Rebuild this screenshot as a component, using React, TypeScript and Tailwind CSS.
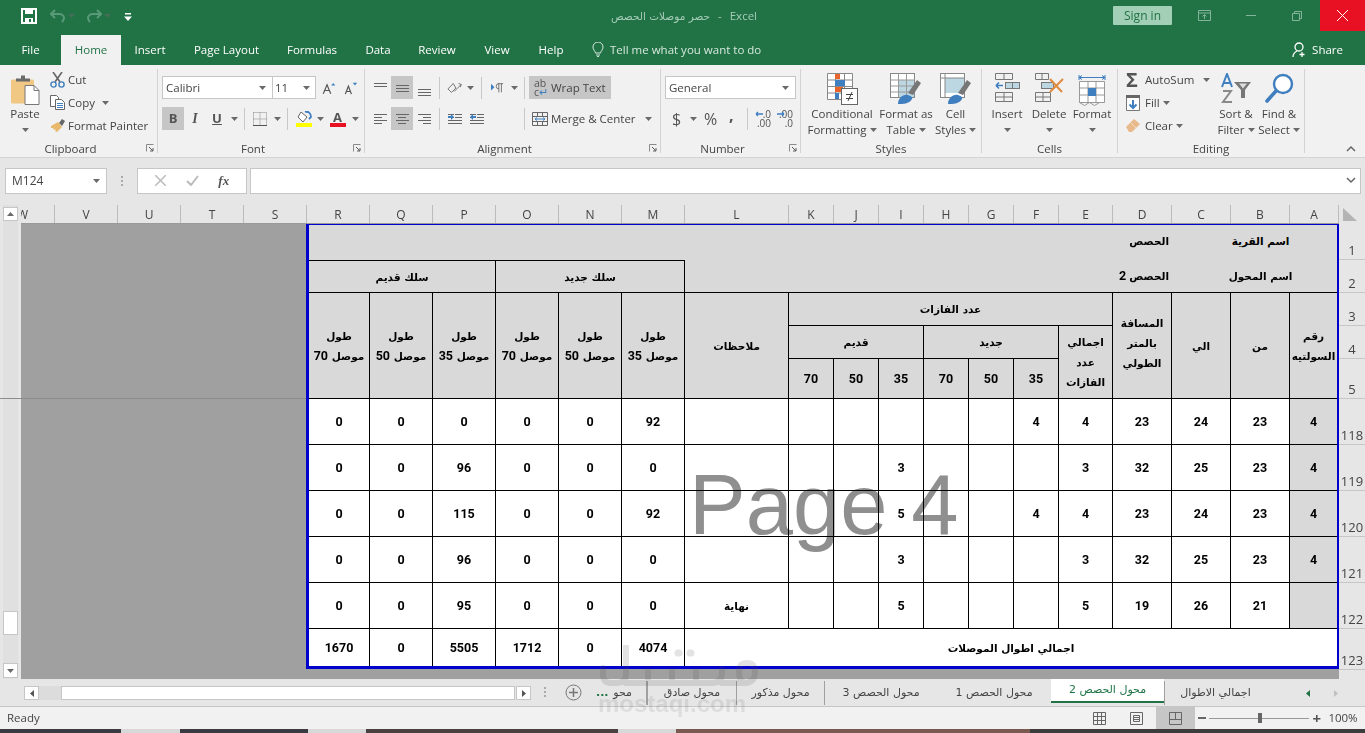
import React from 'react';

const Caret = ({ className = '' }: { className?: string }) => (
  <svg width="7" height="4" viewBox="0 0 7 4" className={`flex-none ${className}`}><path d="M0 0h7L3.5 4z" fill="#6a6a6a" /></svg>
);

const Launcher = () => (
  <svg width="8" height="8" viewBox="0 0 8 8" className="absolute right-[3px] top-[1px]">
    <path d="M.5 7.5V.5h7" fill="none" stroke="#8a8a8a" />
    <path d="M3 3l4 4M7 4v3H4" fill="none" stroke="#5a5a5a" />
  </svg>
);

function Group({ w, label, launcher, children }: { w: string; label: string; launcher?: boolean; children: React.ReactNode }) {
  return (
    <div className={`${w} flex-none h-[84px] mt-[4px] border-r border-[#d2d2d2] flex flex-col`}>
      <div className="h-[74px] flex">{children}</div>
      <div className={`relative h-[10px] leading-[12px] text-center text-[11.5px] text-[#444] ${launcher ? 'pr-[16px]' : ''}`}>
        {label}
        {launcher && <Launcher />}
      </div>
    </div>
  );
}

function Big({ w, icon, lines, caret }: { w: string; icon: React.ReactNode; lines: string[]; caret?: boolean }) {
  return (
    <div className={`${w} flex-none flex flex-col items-center pt-[4px] text-[#444] whitespace-nowrap`}>
      <div className="h-[33px] flex items-start justify-center">{icon}</div>
      {lines.map((l, i) => (
        <div key={l} className="h-[16px] leading-[16px] flex items-center gap-[3px]">
          {l}
          {caret && i === lines.length - 1 && <Caret />}
        </div>
      ))}
      {lines.length === 1 && <div className="h-[16px] flex items-center"><Caret /></div>}
    </div>
  );
}

const Lines = ({ rows }: { rows: [number, number, number][] }) => (
  <svg width="16" height="16" viewBox="0 0 16 16">
    {rows.map((r, i) => <path key={i} d={`M${r[0]} ${r[2] + 0.5}H${r[1]}`} stroke="#666" />)}
  </svg>
);

const Sel = ({ on, children, w = 'w-[22px]' }: { on?: boolean; children: React.ReactNode; w?: string }) => (
  <div className={`${w} h-[23px] flex-none flex items-center justify-center ${on ? 'bg-[#c6c6c6]' : ''}`}>{children}</div>
);

const Sep = () => <div className="w-px h-[22px] bg-[#c8c8c8] flex-none" />;

function Clipboard() {
  return (
    <>
      <div className="w-[50px] flex flex-col items-center pt-[4px] text-[#444]">
        <svg width="30" height="30" viewBox="0 0 30 30" className="h-[33px]">
          <rect x="1" y="5" width="23" height="24" rx="1.5" fill="#f0c884" />
          <path d="M6 7V4h5V1h4v3h5v3z" fill="#6a6a6a" />
          <path d="M15 11h9l5 5v14H15z" fill="#fff" stroke="#777" />
          <path d="M24 11v5h5" fill="none" stroke="#777" />
        </svg>
        <div className="h-[16px] leading-[16px]">Paste</div>
        <div className="h-[16px] flex items-center"><Caret /></div>
      </div>
      <div className="flex flex-col text-[#444] -mt-[1px]">
        <div className="h-[23px] flex items-center whitespace-nowrap">
          <svg width="15" height="16" viewBox="0 0 15 16" className="mr-[3px]">
            <path d="M3 0l7 10M12 0L5 10" stroke="#666" strokeWidth="1.6" />
            <circle cx="3.5" cy="12.5" r="2.6" fill="none" stroke="#3f7fc0" strokeWidth="1.4" />
            <circle cx="11.5" cy="12.5" r="2.6" fill="none" stroke="#3f7fc0" strokeWidth="1.4" />
          </svg>
          Cut
        </div>
        <div className="h-[23px] flex items-center whitespace-nowrap">
          <svg width="15" height="15" viewBox="0 0 15 15" className="mr-[3px]">
            <path d="M.5.5h6l2 2v9H.5z" fill="#fff" stroke="#666" />
            <path d="M5.5 4.5h6l3 3v7h-9z" fill="#fff" stroke="#666" />
            <path d="M7 8.5h6M7 10.5h6M7 12.5h6" stroke="#3f7fc0" />
          </svg>
          Copy
          <Caret className="ml-[7px]" />
        </div>
        <div className="h-[23px] flex items-center whitespace-nowrap">
          <svg width="16" height="15" viewBox="0 0 16 15" className="mr-[2px]">
            <path d="M9 5l3-4 3 2-3 5z" fill="#666" />
            <path d="M1 8l7-4 4 5-5 5-2-1 1-2-2 1-1-2-2 0z" fill="#e8b96c" />
          </svg>
          Format Painter
        </div>
      </div>
    </>
  );
}

function Font() {
  return (
    <div className="pt-[7px] pl-[4px] text-[#444]">
      <div className="h-[23px] flex items-center">
        <div className="w-[111px] h-[23px] bg-white border border-[#c6c6c6] flex items-center justify-between px-[3px] pr-[6px]">Calibri<Caret /></div>
        <div className="w-[43px] h-[23px] bg-white border border-l-0 border-[#c6c6c6] flex items-center justify-between px-[2px] pr-[5px]">11<Caret /></div>
        <svg width="15" height="14" viewBox="0 0 18 14" className="ml-[6px]">
          <path d="M1.5 14L6 3l4.500 11M3.200 10h5.600" fill="none" stroke="#555" strokeWidth="1.400" />
          <path d="M11 4l2.500-3L16 4z" fill="#3f7fc0" />
        </svg>
        <svg width="14" height="14" viewBox="0 0 16 14" className="ml-[7px]">
          <path d="M1.500 14L5 5l3.500 9M2.800 11h4.400" fill="none" stroke="#555" strokeWidth="1.400" />
          <path d="M10 1h5l-2.500 3z" fill="#3f7fc0" />
        </svg>
      </div>
      <div className="h-[23px] flex items-center mt-[8px]">
        <Sel on><span className="font-bold text-[#555] text-[13px]">B</span></Sel>
        <Sel><span className="italic font-['Liberation_Serif',serif] font-bold text-[#555] text-[14px]">I</span></Sel>
        <Sel><span className="underline font-bold text-[#555] text-[13px]">U</span></Sel>
        <Caret className="ml-[3px]" />
        <div className="w-[6px]" />
        <Sep />
        <svg width="14" height="14" viewBox="0 0 14 14" className="ml-[8px]">
          <path d="M.5.500h13v13M.5.500v13M7 .500v13M.5 7H14" fill="none" stroke="#888" strokeDasharray="1 1" />
          <path d="M0 13.500h14" stroke="#555" />
        </svg>
        <Caret className="ml-[7px]" />
        <div className="w-[6px]" />
        <Sep />
        <div className="w-[17px] ml-[7px] flex flex-col items-center">
          <svg width="16" height="12" viewBox="0 0 16 12">
            <path d="M5 1l6 5-4 5-5-5z" fill="#fff" stroke="#666" />
            <path d="M9 1c3-1 6 1 6 5l-2 2" fill="none" stroke="#3f7fc0" strokeWidth="1.800" />
          </svg>
          <div className="w-[16px] h-[4px] bg-[#ffff00]" />
        </div>
        <Caret className="ml-[5px]" />
        <div className="w-[17px] ml-[5px] flex flex-col items-center">
          <span className="text-[13px] leading-[12px] text-[#555] font-bold">A</span>
          <div className="w-[16px] h-[4px] bg-[#e81123]" />
        </div>
        <Caret className="ml-[6px]" />
      </div>
    </div>
  );
}

const doIcon = (d: string) => (
  <svg width="16" height="16" viewBox="0 0 16 16">
    <path d="M1 3.500h6M1 6.500h6M1 9.500h14M1 12.500h14" stroke="#666" />
    <path d={d} fill="#3f7fc0" />
    <path d="M8 3.500h7M8 6.500h7" stroke="#666" />
  </svg>
);

function Alignment() {
  return (
    <div className="pt-[7px] pl-[4px] text-[#444]">
      <div className="h-[23px] flex items-center">
        <Sel><Lines rows={[[2, 15, 3], [2, 15, 6]]} /></Sel>
        <Sel on><Lines rows={[[2, 15, 5], [2, 15, 8], [2, 15, 11]]} /></Sel>
        <Sel><Lines rows={[[2, 15, 9], [2, 15, 12], [2, 15, 15]]} /></Sel>
        <div className="w-[4px]" />
        <Sep />
        <svg width="16" height="16" viewBox="0 0 18 16" className="ml-[7px]">
          <path d="M1 9l6-6 3 5-5 5zM8 12l8-8M13 3l3 1-1 3" fill="none" stroke="#666" />
        </svg>
        <Caret className="ml-[4px]" />
        <div className="w-[7px]" />
        <Sep />
        <svg width="13" height="12" viewBox="0 0 15 12" className="ml-[9px]">
          <path d="M0 1l4 4-4 4z" fill="#3f7fc0" />
          <path d="M9 1a3 3 0 000 6M9 1v10M12 1v10M8 1h6" fill="none" stroke="#666" />
        </svg>
        <Caret className="ml-[7px]" />
        <div className="w-[6px]" />
        <Sep />
        <div className="w-[4px]" />
        <div className="w-[82px] h-[23px] bg-[#c6c6c6] flex items-center px-[5px] gap-[5px] whitespace-nowrap">
          <span className="text-[10.500px] leading-[9px] w-[12px] text-[#555]">ab<br />c<span className="text-[#3f7fc0]">↵</span></span>
          Wrap Text
        </div>
      </div>
      <div className="h-[23px] flex items-center mt-[8px]">
        <Sel><Lines rows={[[2, 15, 3], [2, 10, 6], [2, 15, 9], [2, 10, 12]]} /></Sel>
        <Sel on><Lines rows={[[2, 15, 3], [4, 12, 6], [2, 15, 9], [4, 12, 12]]} /></Sel>
        <Sel><Lines rows={[[2, 15, 3], [7, 15, 6], [2, 15, 9], [7, 15, 12]]} /></Sel>
        <div className="w-[4px]" />
        <Sep />
        <div className="ml-[7px]">{doIcon('M1 5h3V3l3 3-3 3V7H1z')}</div>
        <div className="ml-[6px]">{doIcon('M7 5H4V3L1 6l3 3V7h3z')}</div>
        <div className="w-[39px]" />
        <Sep />
        <div className="w-[7px]" />
        <svg width="16" height="16" viewBox="0 0 16 16" className="mr-[3px]">
          <path d="M.5 1.500h15v13H.5zM.5 5.500h15M.5 10.500h15M5.500 1.500v4M10.500 1.500v4M5.500 10.500v4M10.500 10.500v4" fill="none" stroke="#666" />
          <path d="M3 8h10M3 8l2-1.500M3 8l2 1.500M13 8l-2-1.500M13 8l-2 1.500" fill="none" stroke="#3f7fc0" />
        </svg>
        <span className="whitespace-nowrap">Merge &amp; Center</span>
        <Caret className="ml-[9px]" />
      </div>
    </div>
  );
}

const decIcon = (top: string, bottom: string, d: string) => (
  <div className="w-[16px] text-[10px] leading-[9px] text-[#555] text-right relative">
    {top}<br />{bottom}
    <svg width="8" height="6" viewBox="0 0 8 6" className="absolute left-0 top-[1px]"><path d={d} stroke="#3f7fc0" fill="none" strokeWidth="1.300" /></svg>
  </div>
);

function NumberGroup() {
  return (
    <div className="pt-[7px] pl-[4px] text-[#444]">
      <div className="w-[131px] h-[23px] bg-white border border-[#c6c6c6] flex items-center justify-between px-[3px] pr-[6px]">General<Caret /></div>
      <div className="h-[23px] flex items-center mt-[8px] pl-[7px]">
        <span className="text-[16px] text-[#555] w-[10px]">$</span>
        <Caret className="ml-[8px]" />
        <span className="text-[16px] text-[#555] ml-[7px] w-[13px]">%</span>
        <span className="text-[16px] font-bold text-[#555] ml-[12px] w-[4px] leading-[10px] mb-[8px]">,</span>
        <div className="w-[14px]" />
        <Sep />
        <div className="ml-[7px]">{decIcon('.0', '.00', 'M8 3H1M1 3l2-2M1 3l2 2')}</div>
        <div className="ml-[6px]">{decIcon('.00', '.0', 'M0 3h7M7 3L5 1M7 3L5 5')}</div>
      </div>
    </div>
  );
}

const CondIcon = () => (
  <svg width="31" height="32" viewBox="0 0 31 32">
    <path d="M.5.500h25v26H.5zM.5 7h25M.5 13.500h25M.5 20h25M8.500.500v26M17.500.500v26" fill="#fff" stroke="#888" />
    <rect x="8" y="1" width="5" height="5" fill="#e8642c" />
    <rect x="8" y="7" width="10" height="6" fill="#3f7fc0" />
    <rect x="8" y="14" width="8" height="5" fill="#e8642c" />
    <rect x="8" y="20" width="4" height="6" fill="#3f7fc0" />
    <rect x="14.500" y="15.500" width="16" height="16" fill="#fff" stroke="#666" />
    <path d="M19 21.500h7M19 25.500h7M25 19l-4 9" stroke="#444" />
  </svg>
);

const TableIcon = ({ styles }: { styles?: boolean }) => (
  <svg width="32" height="32" viewBox="0 0 32 32">
    <rect x=".5" y=".5" width="24" height="24" fill="#fff" stroke="#888" />
    <rect x={styles ? 5 : 8} y={styles ? 5 : 7} width={styles ? 19 : 16} height={styles ? 15 : 17} fill="#bcd6e2" />
    {styles ? <path d="M5 .5v24M.5 5h24" stroke="#888" /> : <path d="M8.500.500v24M16.500.500v24M.5 7h24M.5 13h24M.5 19h24" stroke="#999" />}
    <path d="M18 20l9-13 4 3-8 12z" fill="#777" />
    <path d="M8 31c0-6 5-10 10-9 3 1 5 2 4 4-3 5-9 5-14 5z" fill="#3f7fc0" />
  </svg>
);

const InsertIcon = () => (
  <svg width="26" height="29" viewBox="0 0 26 29">
    <path d="M1.500.500h17v6h-17zM10 .500v6M1.500 19.500h17v9h-17zM1.500 24h17M10 19.500v9" fill="none" stroke="#777" />
    <rect x="11.500" y="9.500" width="14" height="6" fill="#bcd6e2" stroke="#777" />
    <path d="M18.500 9.500v6" stroke="#777" />
    <path d="M9 12.500H2M2 12.500l3-3M2 12.500l3 3" fill="none" stroke="#3f7fc0" strokeWidth="1.600" />
  </svg>
);

const DeleteIcon = () => (
  <svg width="30" height="29" viewBox="0 0 30 29">
    <path d="M1.500.500h13v6h-13zM8 .500v6M1.500 19.500h15v9h-15zM1.500 24h15M9 19.500v9" fill="none" stroke="#777" />
    <rect x="7.500" y="9.500" width="12" height="6" fill="#bcd6e2" stroke="#777" />
    <path d="M16 6l12 13M29 6L16 19" stroke="#e08a3c" strokeWidth="2" />
  </svg>
);

const FormatIcon = () => (
  <svg width="28" height="33" viewBox="0 0 28 33">
    <path d="M1 4.500h26M1 2v5M27 2v5M1 4.500l3-2M1 4.500l3 2M27 4.500l-3-2M27 4.500l-3 2" fill="none" stroke="#3f7fc0" />
    <path d="M1.500 8.500h25v21h-25zM1.500 15h25M1.500 22h25M10 8.500v21M18 8.500v21" fill="#fff" stroke="#999" />
    <rect x="10" y="15" width="8" height="8" fill="#3f7fc0" />
    <path d="M1.500 29.500l5 3 5-3 5 3 5-3" fill="none" stroke="#999" />
  </svg>
);

const SortIcon = () => (
  <svg width="32" height="32" viewBox="0 0 32 32">
    <path d="M2 14L7 1l5 13M3.600 10h7" fill="none" stroke="#3f7fc0" strokeWidth="2" />
    <path d="M3 18h8l-8 11h9" fill="none" stroke="#8a8a8a" strokeWidth="2" />
    <path d="M14 9h17l-6 8v8h-4v-8z" fill="#777" />
    <path d="M19 10.500h8l-4 5z" fill="#ddd" />
  </svg>
);

const FindIcon = () => (
  <svg width="29" height="30" viewBox="0 0 29 30">
    <circle cx="18" cy="11" r="9" fill="#fff" stroke="#3f7fc0" strokeWidth="2.400" />
    <path d="M11 18L2 28" stroke="#3f7fc0" strokeWidth="3.600" strokeLinecap="round" />
  </svg>
);

function Ribbon() {
  return (
    <div className="h-[93px] flex-none bg-[#f1f1f1] border-b border-[#d4d4d4] flex text-[11.5px]">
      <Group w="w-[158px]" label="Clipboard" launcher><Clipboard /></Group>
      <Group w="w-[207px]" label="Font" launcher><Font /></Group>
      <Group w="w-[296px]" label="Alignment" launcher><Alignment /></Group>
      <Group w="w-[140px]" label="Number" launcher><NumberGroup /></Group>
      <Group w="w-[181px]" label="Styles">
        <Big w="w-[82px]" icon={<CondIcon />} lines={['Conditional', 'Formatting']} caret />
        <Big w="w-[46px]" icon={<TableIcon />} lines={['Format as', 'Table']} caret />
        <Big w="w-[53px]" icon={<TableIcon styles />} lines={['Cell', 'Styles']} caret />
      </Group>
      <Group w="w-[136px]" label="Cells">
        <Big w="w-[50px]" icon={<InsertIcon />} lines={['Insert']} />
        <Big w="w-[34px]" icon={<DeleteIcon />} lines={['Delete']} />
        <Big w="w-[52px]" icon={<FormatIcon />} lines={['Format']} />
      </Group>
      <Group w="w-[187px]" label="Editing">
        <div className="w-[96px] flex-none flex flex-col text-[#444] pl-[8px] -mt-[1px]">
          <div className="h-[23px] flex items-center whitespace-nowrap">
            <span className="w-[19px] text-[20px] leading-[20px] text-[#555] font-bold">Σ</span>AutoSum
            <Caret className="ml-[9px]" />
          </div>
          <div className="h-[23px] flex items-center whitespace-nowrap">
            <svg width="14" height="16" viewBox="0 0 14 16" className="mr-[5px]">
              <path d="M.5.500h13v15H.5z" fill="#fff" stroke="#777" />
              <path d="M0 0h14v3H0z" fill="#666" />
              <path d="M7 5v8M3.500 9.500L7 13l3.500-3.500" fill="none" stroke="#3f7fc0" strokeWidth="2" />
            </svg>
            Fill
            <Caret className="ml-[3px]" />
          </div>
          <div className="h-[23px] flex items-center whitespace-nowrap text-[#444]">
            <svg width="14" height="13" viewBox="0 0 14 13" className="mr-[5px]">
              <path d="M0 8l8-8 6 5-8 8H3z" fill="#e8b98a" />
              <path d="M5 4l5 5" stroke="#f6dcc0" />
            </svg>
            Clear
            <Caret className="ml-[3px]" />
          </div>
        </div>
        <Big w="w-[44px]" icon={<SortIcon />} lines={['Sort &', 'Filter']} caret />
        <Big w="w-[42px]" icon={<FindIcon />} lines={['Find &', 'Select']} caret />
      </Group>
      <div className="flex-1 flex items-end justify-end pb-[5px] pr-[9px]">
        <svg width="10" height="7" viewBox="0 0 10 7"><path d="M1 6l4-4 4 4" fill="none" stroke="#666" strokeWidth="1.500" /></svg>
      </div>
    </div>
  );
}

const tabs: [string, string][] = [
  ['File', 'w-[61px]'], ['Home', 'w-[60px]'], ['Insert', 'w-[58px]'], ['Page Layout', 'w-[95px]'],
  ['Formulas', 'w-[76px]'], ['Data', 'w-[56px]'], ['Review', 'w-[62px]'], ['View', 'w-[58px]'], ['Help', 'w-[50px]'],
];

function TitleBar() {
  return (
    <div className="bg-[#217346] h-[65px] flex-none text-white text-[11.5px]">
      <div className="h-[35px] flex items-start">
        <svg width="16" height="16" viewBox="0 0 16 16" className="ml-[21px] mt-[8px]">
          <path d="M1 1h14v14H1z" fill="none" stroke="#fff" strokeWidth="2" />
          <path d="M4 1h8v5H4zM4 10h8v5H4z" fill="#fff" />
          <path d="M8 11h2v3H8z" fill="#217346" />
        </svg>
        <svg width="16" height="14" viewBox="0 0 16 14" className="ml-[13px] mt-[9px]">
          <path d="M5 1L1 5l4 4M1 5h8c3 0 5 2 5 4s-1 3-2 4" fill="none" stroke="#5a9a78" strokeWidth="2" />
        </svg>
        <Caret className="ml-[2px] mt-[14px] opacity-50" />
        <svg width="16" height="14" viewBox="0 0 16 14" className="ml-[11px] mt-[9px]">
          <path d="M11 1l4 4-4 4M15 5H7C4 5 2 7 2 9s1 3 2 4" fill="none" stroke="#5a9a78" strokeWidth="2" />
        </svg>
        <Caret className="ml-[2px] mt-[14px] opacity-50" />
        <svg width="8" height="8" viewBox="0 0 8 8" className="ml-[13px] mt-[13px]"><path d="M1 0h6v1.500H1zM0 3.500h8L4 8z" fill="#fff" /></svg>
        <div className="w-[479px]" />
        <div className="text-[#a6ccb8] whitespace-nowrap w-[146px] mt-[8px] leading-[16px] flex justify-between items-center">
          <span dir="rtl" className="font-['DejaVu_Sans',sans-serif] text-[10.500px]">حصر موصلات الحصص</span>
          <span>-</span>
          <span>Excel</span>
        </div>
        <div className="flex-1" />
        <div className="w-[59px] h-[19px] mt-[6px] bg-[#a3cfb6] rounded-[1px] text-[#217346] text-[12px] flex items-center justify-center">Sign in</div>
        <div className="w-[148px] flex items-center justify-around h-[31px] pl-[8px]">
          <svg width="13" height="11" viewBox="0 0 13 11"><path d="M.5.500h12v10H.5zM.5 3h12M6.500 9V5M4.500 6.500l2-2 2 2" fill="none" stroke="#84b49a" /></svg>
          <div className="w-[10px] h-px bg-[#84b49a]" />
          <svg width="10" height="10" viewBox="0 0 10 10"><path d="M.5 2.500h7v7h-7zM2.500 2.500v-2h7v7h-2" fill="none" stroke="#84b49a" /></svg>
        </div>
        <div className="w-[45px] h-[31px] bg-[#e81123] flex items-center justify-center">
          <svg width="11" height="11" viewBox="0 0 11 11"><path d="M0 0l11 11M11 0L0 11" stroke="#fff" /></svg>
        </div>
      </div>
      <div className="h-[30px] flex items-stretch">
        {tabs.map(([t, w]) => (
          <div key={t} className={`${w} flex items-center justify-center ${t === 'Home' ? 'bg-[#f1f1f1] text-[#217346]' : ''}`}>{t}</div>
        ))}
        <svg width="12" height="15" viewBox="0 0 12 15" className="ml-[16px] mt-[7px]">
          <path d="M3.500 11C3 8.500 1 8 1 5a5 5 0 0110 0c0 3-2 3.500-2.500 6zM4 13h4M5 14.500h2" fill="none" stroke="#d5e8dd" />
        </svg>
        <div className="ml-[6px] flex items-center text-[#d5e8dd] whitespace-nowrap">Tell me what you want to do</div>
        <div className="flex-1" />
        <div className="flex items-center gap-[5px] pr-[22px]">
          <svg width="15" height="16" viewBox="0 0 15 16">
            <circle cx="7" cy="5" r="4" fill="none" stroke="#fff" strokeWidth="1.300" />
            <path d="M1 15c0-3 2-5 4-6M10 10v5M7.500 12.500h5" fill="none" stroke="#fff" strokeWidth="1.300" />
          </svg>
          Share
        </div>
      </div>
    </div>
  );
}

function FormulaBar() {
  return (
    <div className="h-[47px] flex-none bg-[#e6e6e6] flex items-center pl-[5px] pr-[4px] pb-[2px] text-[12px] text-[#444]">
      <div className="w-[102px] h-[26px] bg-white border border-[#c6c6c6] flex items-center justify-between px-[6px]">M124<Caret /></div>
      <div className="w-[30px] flex flex-col items-center gap-[2px]">
        <div className="w-[2px] h-[2px] bg-[#aaa]" />
        <div className="w-[2px] h-[2px] bg-[#aaa]" />
        <div className="w-[2px] h-[2px] bg-[#aaa]" />
      </div>
      <div className="w-[110px] h-[26px] bg-white border border-[#c6c6c6] flex items-center justify-around px-[7px]">
        <svg width="11" height="11" viewBox="0 0 11 11"><path d="M0 0l11 11M11 0L0 11" stroke="#bbb" strokeWidth="1.500" /></svg>
        <svg width="13" height="11" viewBox="0 0 13 11"><path d="M1 6l4 4 7-9" fill="none" stroke="#bbb" strokeWidth="2" /></svg>
        <span className="italic font-bold font-['Liberation_Serif',serif] text-[13px] text-[#555]">fx</span>
      </div>
      <div className="w-[3px]" />
      <div className="flex-1 h-[26px] bg-white border border-[#c6c6c6] flex items-center justify-end pr-[4px]">
        <svg width="10" height="7" viewBox="0 0 10 7"><path d="M1 1l4 4 4-4" fill="none" stroke="#666" strokeWidth="1.500" /></svg>
      </div>
    </div>
  );
}

const colHeads: [string, string][] = [
  ['V', 'w-[63px]'], ['U', 'w-[63px]'], ['T', 'w-[63px]'], ['S', 'w-[63px]'], ['R', 'w-[63px]'], ['Q', 'w-[63px]'], ['P', 'w-[63px]'],
  ['O', 'w-[63px]'], ['N', 'w-[63px]'], ['M', 'w-[63px]'], ['L', 'w-[104px]'], ['K', 'w-[45px]'], ['J', 'w-[45px]'], ['I', 'w-[45px]'],
  ['H', 'w-[45px]'], ['G', 'w-[45px]'], ['F', 'w-[45px]'], ['E', 'w-[54px]'], ['D', 'w-[59px]'], ['C', 'w-[59px]'], ['B', 'w-[59px]'], ['A', 'w-[49px]'],
];

const rowHeads: [string, string][] = [
  ['1', 'h-[36px]'], ['2', 'h-[33px]'], ['3', 'h-[33px]'], ['4', 'h-[33px]'], ['5', 'h-[40px]'], ['118', 'h-[46px]'],
  ['119', 'h-[46px]'], ['120', 'h-[46px]'], ['121', 'h-[46px]'], ['122', 'h-[46px]'], ['123', 'h-[41px]'],
];

const data: string[][] = [
  ['0', '0', '0', '0', '0', '92', '', '', '', '', '', '', '4', '4', '23', '24', '23', '4'],
  ['0', '0', '96', '0', '0', '0', '', '', '', '3', '', '', '', '3', '32', '25', '23', '4'],
  ['0', '0', '115', '0', '0', '92', '', '', '', '5', '', '', '4', '4', '23', '24', '23', '4'],
  ['0', '0', '96', '0', '0', '0', '', '', '', '3', '', '', '', '3', '32', '25', '23', '4'],
  ['0', '0', '95', '0', '0', '0', 'نهاية', '', '', '5', '', '', '', '5', '19', '26', '21', ''],
];

const bd = 'border-r border-b border-black';

function Cell({ className = '', children }: { className?: string; children?: React.ReactNode }) {
  return (
    <div dir="rtl" className={`flex items-center justify-center text-center text-[10.5px] leading-[20px] font-bold text-black font-['DejaVu_Sans',sans-serif] ${className}`}>
      {children}
    </div>
  );
}

const Num = ({ children }: { children: React.ReactNode }) => (
  <span className="font-['Roboto',sans-serif] text-[12.5px]">{children}</span>
);

function Sheet() {
  return (
    <div className="relative h-[474px] flex-none flex bg-[#e6e6e6]">
      <div className="w-[21px] flex-none pl-[3px]">
        <div className="w-[15px] h-full bg-[#e0e0e0] flex flex-col pt-[2px] pb-[1px]">
          <div className="h-[14px] bg-white border border-[#c6c6c6] flex items-center justify-center">
            <svg width="7" height="4" viewBox="0 0 7 4"><path d="M0 4h7L3.500 0z" fill="#6a6a6a" /></svg>
          </div>
          <div className="flex-1" />
          <div className="h-[24px] bg-white border border-[#c6c6c6]" />
          <div className="h-[28px]" />
          <div className="h-[15px] bg-white border border-[#c6c6c6] flex items-center justify-center"><Caret /></div>
        </div>
      </div>
      <div className="w-[1318px] flex-none flex flex-col">
        <div className="h-[19px] flex-none flex border-b border-[#9a9a9a] text-[12px] text-[#444] font-['Open_Sans',sans-serif]">
          <div className="w-[34px] flex-none overflow-hidden flex justify-end border-r border-[#bcbcbc] leading-[19px]">
            <div className="w-[63px] flex-none text-center">W</div>
          </div>
          {colHeads.map(([c, w]) => (
            <div key={c} className={`${w} flex-none text-center border-r border-[#bcbcbc] leading-[19px]`}>{c}</div>
          ))}
        </div>
        <div className="flex-1 flex items-start bg-[#a0a0a0] pl-[285px]">
          <div className="relative w-[1033px] flex-none bg-white border-t border-r-2 border-l-[3px] border-b-[3px] border-[#0000cc] grid grid-cols-[61px_63px_63px_63px_63px_63px_104px_45px_45px_45px_45px_45px_45px_54px_59px_59px_59px_47px] grid-rows-[35px_33px_33px_33px_40px_46px_46px_46px_46px_46px_37px]">
            <Cell className="col-span-14 bg-[#d9d9d9]" />
            <Cell className="bg-[#d9d9d9] !justify-start pr-[3px] pb-[4px]">الحصص</Cell>
            <Cell className="bg-[#d9d9d9]" />
            <Cell className="bg-[#d9d9d9] pb-[4px] whitespace-nowrap relative z-[1]">اسم القرية</Cell>
            <Cell className="bg-[#d9d9d9]" />

            <Cell className={`col-span-3 bg-[#d9d9d9] border-t border-black ${bd}`}>سلك قديم</Cell>
            <Cell className={`col-span-3 bg-[#d9d9d9] border-t border-black ${bd}`}>سلك جديد</Cell>
            <Cell className="col-span-8 bg-[#d9d9d9] border-b border-black" />
            <Cell className="bg-[#d9d9d9] border-b border-black !justify-start pr-[3px] whitespace-nowrap">الحصص <Num>&nbsp;2</Num></Cell>
            <Cell className="bg-[#d9d9d9] border-b border-black" />
            <Cell className="bg-[#d9d9d9] border-b border-black whitespace-nowrap relative z-[1]">اسم المحول</Cell>
            <Cell className="bg-[#d9d9d9] border-b border-black" />

            {['70', '50', '35', '70', '50', '35'].map((n, i) => (
              <Cell key={i} className={`row-span-3 bg-[#d9d9d9] ${bd} flex-col whitespace-nowrap`}>
                <div>طول</div>
                <div>موصل <Num>{n}</Num></div>
              </Cell>
            ))}
            <Cell className={`row-span-3 bg-[#d9d9d9] ${bd}`}>ملاحظات</Cell>
            <Cell className={`col-span-7 bg-[#d9d9d9] ${bd}`}>عدد الفازات</Cell>
            <Cell className={`row-span-3 bg-[#d9d9d9] ${bd} flex-col pb-[6px] whitespace-nowrap`}>
              <div>المسافة</div><div>بالمتر</div><div>الطولي</div>
            </Cell>
            <Cell className={`row-span-3 bg-[#d9d9d9] ${bd}`}>الي</Cell>
            <Cell className={`row-span-3 bg-[#d9d9d9] ${bd}`}>من</Cell>
            <Cell className="row-span-3 bg-[#d9d9d9] border-b border-black flex-col whitespace-nowrap">
              <div>رقم</div><div>السولتيه</div>
            </Cell>

            <Cell className={`col-span-3 bg-[#d9d9d9] ${bd}`}>قديم</Cell>
            <Cell className={`col-span-3 bg-[#d9d9d9] ${bd}`}>جديد</Cell>
            <Cell className={`row-span-2 bg-[#d9d9d9] ${bd} flex-col whitespace-nowrap`}>
              <div>اجمالي</div><div>عدد</div><div>الفازات</div>
            </Cell>
            {['70', '50', '35', '70', '50', '35'].map((n, i) => (
              <Cell key={i} className={`bg-[#d9d9d9] ${bd}`}><Num>{n}</Num></Cell>
            ))}

            {data.map((row, r) => row.map((v, c) => (
              <Cell key={`${r}-${c}`} className={c === 17 ? 'bg-[#d9d9d9] border-b border-black' : bd}>
                {c === 6 ? v : <Num>{v}</Num>}
              </Cell>
            )))}

            {['1670', '0', '5505', '1712', '0', '4074'].map((v, i) => (
              <Cell key={i} className="border-r border-black"><Num>{v}</Num></Cell>
            ))}
            <Cell className="col-span-12">اجمالي اطوال الموصلات</Cell>

            <div className="absolute left-[380px] top-[237px] text-[85px] leading-[85px] text-[#8f8f8f] font-['Liberation_Sans',sans-serif] whitespace-nowrap mix-blend-multiply">Page 4</div>
          </div>
        </div>
      </div>
      <div className="w-[26px] flex-none flex flex-col pt-[19px] font-['Open_Sans',sans-serif] text-[13px] leading-[16px] text-[#444]">
        {rowHeads.map(([n, h]) => (
          <div key={n} className={`${h} flex-none border-b border-[#c6c6c6] flex items-end justify-center pb-[1px]`}>{n}</div>
        ))}
      </div>
      <svg width="14" height="13" viewBox="0 0 14 13" className="absolute right-[8px] top-[3px]"><path d="M0 0l14 13H0z" fill="#b4b4b4" /></svg>
      <div className="absolute left-0 top-[193px] w-[306px] h-px bg-[#8c8c8c]" />
    </div>
  );
}

const sheetTabs: [string, string, boolean][] = [
  ['محول صادق', 'w-[89px]', true], ['محول مذكور', 'w-[88px]', true], ['محول الحصص 3', 'w-[113px]', true], ['محول الحصص 1', 'w-[114px]', false],
];

function TabBar() {
  return (
    <div className="h-[28px] flex-none bg-[#e6e6e6] border-b border-[#c6c6c6] flex items-start font-['DejaVu_Sans',sans-serif] text-[11px] text-[#444]">
      <div className="ml-[24px] mt-[7px] flex h-[14px]">
        <div className="w-[15px] h-[14px] bg-white border border-[#c6c6c6] flex items-center justify-center">
          <svg width="4" height="7" viewBox="0 0 4 7"><path d="M4 0v7L0 3.500z" fill="#555" /></svg>
        </div>
        <div className="w-[22px] bg-[#dcdcdc]" />
        <div className="w-[454px] bg-white border border-[#c6c6c6]" />
        <div className="w-px" />
        <div className="w-[15px] h-[14px] bg-white border border-[#c6c6c6] flex items-center justify-center">
          <svg width="4" height="7" viewBox="0 0 4 7"><path d="M0 0v7l4-3.500z" fill="#555" /></svg>
        </div>
      </div>
      <div className="ml-[13px] mt-[8px] flex flex-col gap-[2px]">
        <div className="w-[2px] h-[2px] bg-[#aaa]" />
        <div className="w-[2px] h-[2px] bg-[#aaa]" />
        <div className="w-[2px] h-[2px] bg-[#aaa]" />
      </div>
      <svg width="17" height="17" viewBox="0 0 17 17" className="ml-[19px] mt-[5px]">
        <circle cx="8.500" cy="8.500" r="7.500" fill="none" stroke="#777" />
        <path d="M8.500 4v9M4 8.500h9" stroke="#777" strokeWidth="1.500" />
      </svg>
      <div className="w-[51px] ml-[14px] h-[24px] flex items-center justify-between pr-[14px] border-r border-[#a0a0a0] mt-[2px] whitespace-nowrap">
        <span className="text-[#217346] font-bold">...</span><span>محو</span>
      </div>
      {sheetTabs.map(([t, w, sep]) => (
        <div key={t} dir="rtl" className={`${w} h-[24px] mt-[2px] flex items-center justify-center whitespace-nowrap ${sep ? 'border-l border-[#a0a0a0]' : ''}`}>{t}</div>
      ))}
      <div dir="rtl" className="w-[113px] h-[24px] bg-white text-[#217346] border-b-2 border-[#217346] flex items-center justify-center whitespace-nowrap">محول الحصص 2</div>
      <div dir="rtl" className="w-[102px] h-[24px] mt-[2px] border-l border-[#a0a0a0] flex items-center justify-center whitespace-nowrap">اجمالي الاطوال</div>
      <div className="flex-1 flex items-center pl-[40px] gap-[24px] h-[24px] mt-[2px]">
        <svg width="4" height="7" viewBox="0 0 4 7"><path d="M4 0v7L0 3.500z" fill="#217346" /></svg>
        <svg width="4" height="7" viewBox="0 0 4 7"><path d="M0 0v7l4-3.500z" fill="#c0c0c0" /></svg>
      </div>
    </div>
  );
}

function StatusBar() {
  return (
    <div className="h-[22px] flex-none bg-[#f1f1f1] flex items-center text-[11.500px] text-[#444]">
      <div className="pl-[7px]">Ready</div>
      <div className="flex-1" />
      <svg width="13" height="13" viewBox="0 0 13 13"><path d="M.5.500h12v12H.5zM4.500.500v12M8.500.500v12M.5 4.500h12M.5 8.500h12" fill="none" stroke="#666" /></svg>
      <svg width="13" height="13" viewBox="0 0 13 13" className="ml-[24px]"><path d="M.5.500h12v12H.5zM3.500 3.500h6v6h-6zM3.500 5.500h6M3.500 7.500h6" fill="none" stroke="#666" /></svg>
      <div className="w-[39px] h-[22px] ml-[13px] bg-[#c6c6c6] flex items-center justify-center">
        <svg width="13" height="13" viewBox="0 0 13 13"><path d="M.5.500h12v12H.5zM.5 7.500h12M6.500.500v7" fill="none" stroke="#666" /></svg>
      </div>
      <div className="w-[8px] h-[2px] bg-[#666] ml-[3px]" />
      <div className="relative w-[100px] h-px bg-[#999] ml-[3px] flex items-center">
        <div className="w-[4px] h-[10px] bg-[#666] ml-[49px] flex-none" />
      </div>
      <div className="text-[15px] leading-[15px] text-[#555] ml-[3px] font-bold">+</div>
      <div className="w-[44px] text-center">100%</div>
    </div>
  );
}

function Taskbar() {
  return (
    <div className="h-[4px] flex-none flex">
      <div className="w-[121px] bg-[#3a3a42]" />
      <div className="w-[59px] bg-[#d8d8d8]" />
      <div className="w-[128px] bg-[#3a3a42]" />
      <div className="w-[58px] bg-[#d8d8d8]" />
      <div className="w-[252px] bg-[#4a4040]" />
      <div className="w-[58px] bg-[#d8d8d8]" />
      <div className="w-[354px] bg-[#7a5a50]" />
      <div className="flex-1 bg-[#3c3c3c]" />
    </div>
  );
}

export default function App() {
  return (
    <div className="relative w-[1365px] h-[733px] overflow-hidden flex flex-col bg-[#e6e6e6] font-['Open_Sans',sans-serif]">
      <TitleBar />
      <Ribbon />
      <FormulaBar />
      <Sheet />
      <TabBar />
      <StatusBar />
      <Taskbar />
      {/* mostaql watermark */}
      <svg width="165" height="45" viewBox="0 0 165 45" className="absolute left-[600px] top-[645px]" opacity="0.16">
        <path d="M26 1v28q0 9-10 9H11q-8 0-8-9V23M26 38h86q10 0 10-10V24M48 38V26M72 38V26M96 38V26M122 38h22q11 0 11-11 0-9-8-9t-8 9q0 11 8 11" fill="none" stroke="#555" strokeWidth="6" strokeLinecap="round" />
        <path d="M78 8h1M90 8h1" stroke="#555" strokeWidth="7" strokeLinecap="round" />
      </svg>
      <div className="absolute left-[598px] top-[688px] text-[24px] leading-[32px] font-bold text-[#555] opacity-[0.12] font-['Liberation_Sans',sans-serif]">mostaqi.com</div>
    </div>
  );
}
